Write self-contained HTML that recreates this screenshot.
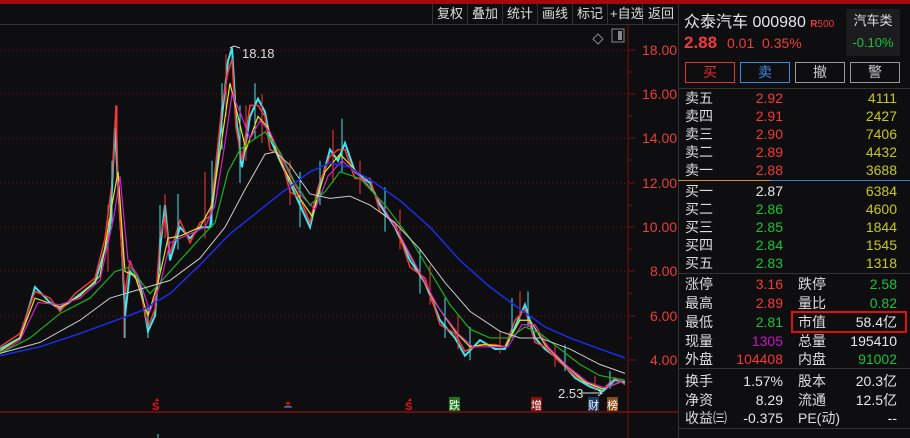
<!DOCTYPE html>
<html><head><meta charset="utf-8"><style>
*{margin:0;padding:0;box-sizing:border-box}
body{width:910px;height:438px;background:#0e0e10;overflow:hidden;position:relative;font-family:"Liberation Sans","Noto Sans CJK SC",sans-serif;color:#ddd}
.a{position:absolute;white-space:nowrap}
.tb{position:absolute;top:4px;height:20px;font-size:13px;color:#ddd;line-height:20px}
.sp{position:absolute;top:4px;width:1px;height:20px;background:#333}
.r{color:#f23a3a}.g{color:#19c23a}.y{color:#c8c814}.w{color:#e6e6e6}.m{color:#c01cc0}
.row{position:absolute;left:678px;width:232px;height:18px;font-size:14px;line-height:18px}
.row span{position:absolute}
</style></head><body>
<div class="a" style="left:0;top:0;width:910px;height:4px;background:#a3080c"></div>
<div class="a" style="left:0;top:24px;width:678px;height:1px;background:#333"></div>
<div class="sp" style="left:432px"></div><div class="sp" style="left:467px"></div><div class="sp" style="left:502px"></div><div class="sp" style="left:537px"></div><div class="sp" style="left:572px"></div><div class="sp" style="left:607px"></div><div class="sp" style="left:642px"></div>
<div class="tb" style="left:437px">复权</div>
<div class="tb" style="left:472px">叠加</div>
<div class="tb" style="left:507px">统计</div>
<div class="tb" style="left:542px">画线</div>
<div class="tb" style="left:577px">标记</div>
<div class="tb" style="left:610px">+自选</div>
<div class="tb" style="left:648px">返回</div>
<div class="a" style="left:678px;top:4px;width:1px;height:434px;background:#333"></div>
<svg class="a" style="left:0;top:0" width="678" height="438">
<g stroke="#7a1010" stroke-dasharray="1,3" stroke-width="1">
<line x1="0" y1="50" x2="628" y2="50"/><line x1="0" y1="94" x2="628" y2="94"/><line x1="0" y1="138" x2="628" y2="138"/><line x1="0" y1="183" x2="628" y2="183"/><line x1="0" y1="227" x2="628" y2="227"/><line x1="0" y1="271" x2="628" y2="271"/><line x1="0" y1="316" x2="628" y2="316"/><line x1="0" y1="360" x2="628" y2="360"/></g>
<line x1="628" y1="25" x2="628" y2="438" stroke="#7a1010"/>
<line x1="0" y1="412" x2="678" y2="412" stroke="#7a1010" stroke-width="1.5"/>
<path d="M628 50h7M628 94h7M628 138h7M628 183h7M628 227h7M628 271h7M628 316h7M628 360h7M628 72h4M628 116h4M628 160h4M628 205h4M628 249h4M628 293h4M628 338h4M628 382h4" stroke="#7a1010"/>
<g font-size="14" fill="#f23a3a" font-family="Liberation Sans"><text x="642" y="55">18.00</text><text x="642" y="99">16.00</text><text x="642" y="143">14.00</text><text x="642" y="188">12.00</text><text x="642" y="232">10.00</text><text x="650" y="276">8.00</text><text x="650" y="321">6.00</text><text x="650" y="365">4.00</text></g>
<path d="M598 34l5 5-5 5-5-5z" fill="none" stroke="#888"/><rect x="612" y="29" width="12" height="13" fill="none" stroke="#888"/><rect x="618" y="31" width="4" height="9" fill="#888"/>
<g transform="translate(0,448.7) scale(1,-22.15)" fill="none">
<polyline vector-effect="non-scaling-stroke" stroke="#3fe6f0" stroke-width="2" points="0,4.5 20,5 35,7.3 50,6.6 60,6.3 75,6.8 95,7.5 105,9 110,10 115,14.5 118,12 122,9 125,6 130,8 140,7.5 148,5.3 155,6 160,9 165,11 170,8.5 180,10 190,9.5 200,10 210,10 215,12 222,15 228,17.5 232,18.1 236,15 242,12.7 250,15 258,15.8 265,15.2 270,14 280,13 290,12 300,11 310,10 318,11.5 330,13.5 338,13 345,13.8 355,12.5 370,12 380,11 395,10 410,8.5 425,7.5 440,5.8 455,5 465,4.2 480,4.9 495,4.5 505,4.5 515,5.5 525,6.5 535,5 545,4.5 560,4 575,3.2 590,2.8 603,2.6 615,3.1 625,3"/>
<polyline vector-effect="non-scaling-stroke" stroke="#f23a3a" stroke-width="1.5" points="0,4.6 20,5.2 35,7.1 50,6.8 60,6.2 75,7 95,7.7 105,9.5 112,12 116,15.5 118,12 123,8 125,7 130,8.5 140,7.2 148,5.5 155,6.3 160,9.5 165,10.5 170,8.8 180,10.3 190,9.3 200,10.2 210,10.5 215,12.5 222,15.5 228,17 232,17.6 236,14.5 242,13 250,15.5 258,15.5 265,15 270,13.5 280,13.3 290,11.6 300,11.3 310,10.2 318,11.8 330,13.2 338,13.5 345,13.5 355,12.2 370,12.2 380,10.7 395,10.2 410,8.2 425,7.7 440,5.6 455,5.2 465,4.4 480,4.7 495,4.7 505,4.6 515,5.8 525,6.3 535,4.8 545,4.6 560,3.9 575,3.3 590,2.9 603,2.7 615,3.2 625,2.9"/>
<path vector-effect="non-scaling-stroke" stroke="#3fe6f0" stroke-width="1" d="M112 10v3M160 8v3M178 9v2.5M212 10v3M222 13.5v3M240 12v3.5M255 14v2.5M300 10v2.5M320 11v2M342 12.5v2.4M385 9.8v2M420 7v2M445 5v1.8M470 4v1.5M512 5v1.8M528 5.5v1.6M565 3.5v1.2M610 2.7v0.8M125 5v2M148 5v1.5"/>
<path vector-effect="non-scaling-stroke" stroke="#f23a3a" stroke-width="1" d="M108 8v3M117 13v2.5M165 9.5v2M205 9.5v3M226 15v2.8M246 13v2.5M262 13.8v2.2M290 11v2M333 12v2.4M360 11.5v1.5M400 9v1.8M430 6.5v1.8M458 4.5v1.5M500 4.3v1M520 5.8v1.3M555 3.7v1M595 2.6v0.7M124 5v2"/>
<polyline vector-effect="non-scaling-stroke" stroke="#e8e020" stroke-width="1.2" points="0,4.4 20,5 35,6.8 60,6.4 80,6.9 100,7.8 112,11 118,12.5 125,8 135,7.8 148,6 158,7.5 168,9.5 180,9.6 200,10 212,11 222,14 230,16.5 238,15 246,13.5 258,15 268,14.5 280,13 300,11.3 312,10.5 325,12.5 340,13.3 355,12.6 375,11.5 395,10 415,8.3 435,6.6 455,5.3 470,4.6 485,4.7 505,4.6 520,5.8 530,5.8 545,4.7 565,3.8 585,3 603,2.7 620,3"/>
<polyline vector-effect="non-scaling-stroke" stroke="#d020d0" stroke-width="1.2" points="0,4.3 20,4.9 38,6.6 60,6.5 80,6.8 100,7.6 114,10.5 120,12.3 128,8.5 138,7.8 150,6.2 160,7.4 170,9.3 185,9.6 205,10 215,11 225,13.8 232,16 240,15.2 250,14 260,14.8 270,14.3 285,12.8 300,11.5 315,10.8 328,12.3 342,13 358,12.4 378,11.3 398,9.8 418,8.1 438,6.4 458,5.2 473,4.6 488,4.6 508,4.6 522,5.6 535,5.6 548,4.6 568,3.7 588,3 605,2.75 622,3.05"/>
<polyline vector-effect="non-scaling-stroke" stroke="#1cb01c" stroke-width="1.2" points="0,4.3 30,5 60,6.1 90,6.8 115,8 130,8.2 150,7 170,8 200,9.5 215,10.2 228,12.5 240,13.5 255,14 265,14.3 280,13.4 295,12 310,11 325,11.6 340,12.5 360,12.2 385,11 410,9.5 430,8 450,6.5 470,5.4 490,5 510,5 525,5.5 540,5.2 560,4.5 580,3.8 600,3.3 625,3.1"/>
<polyline vector-effect="non-scaling-stroke" stroke="#cccccc" stroke-width="1" points="0,4.3 40,4.8 80,5.8 110,6.8 140,7.2 170,7.6 200,8.6 225,10 245,11.7 265,13.3 275,13.4 290,12.8 310,11.5 330,11.3 350,11.4 370,11 395,10.2 420,9 445,7.5 470,6.2 500,5.3 520,5 540,5 570,4.5 600,3.8 625,3.4"/>
<polyline vector-effect="non-scaling-stroke" stroke="#1a2ee8" stroke-width="1.5" points="0,4.2 40,4.6 80,5.2 110,5.7 140,6.2 170,7 200,8.3 230,9.7 255,10.6 280,11.5 310,12.5 330,12.9 350,12.7 375,12 400,11.2 430,10 460,8.5 490,7.3 520,6.3 545,5.5 570,5 600,4.5 625,4.1"/>
</g>
<path d="M230 48l4-2 6 2" stroke="#ddd" fill="none"/><text x="242" y="58" font-size="13" fill="#ddd">18.18</text>
<text x="558" y="398" font-size="13" fill="#ddd">2.53</text><path d="M582 393h20l-4-3m4 3l-4 3" stroke="#ddd" fill="none"/>
<g font-size="11" font-family="Liberation Sans" font-weight="bold"><text x="152" y="410" fill="#f01010">S</text><text x="405" y="410" fill="#f01010">S</text></g>
<path d="M157 398l2 3h-4zM410 398l2 3h-4z" fill="#f01010"/><path d="M288 401l3 3h-6zM288 404l3 3h-6z" fill="#c01010"/><path d="M284 407h8" stroke="#3af"/>
<rect x="449" y="397" width="11" height="14" fill="#1a7a1a"/><text x="449" y="409" font-size="11" fill="#fff">跌</text>
<rect x="531" y="397" width="11" height="14" fill="#8a1010"/><text x="531" y="409" font-size="11" fill="#fff">增</text>
<rect x="588" y="397" width="11" height="14" fill="#1a3a6a"/><text x="588" y="409" font-size="11" fill="#fff">财</text>
<rect x="607" y="397" width="11" height="14" fill="#8a4a10"/><text x="607" y="409" font-size="11" fill="#fff">榜</text>
<line x1="158" y1="434" x2="158" y2="438" stroke="#3fe6f0"/>
</svg>
<div class="a" style="left:684px;top:8px;font-size:16px;color:#e6e6e6">众泰汽车 000980 <span style="color:#f23a3a;font-size:10px;font-weight:bold">R</span><span style="color:#f23a3a;font-size:10px">500</span></div>
<div class="a" style="left:684px;top:33px;font-size:17px;font-weight:bold;color:#f23a3a">2.88</div>
<div class="a" style="left:727px;top:35px;font-size:14px;color:#f23a3a">0.01&nbsp;&nbsp;0.35%</div>
<div class="a" style="left:846px;top:9px;width:54px;height:47px;background:#1c1c1e;text-align:center;font-size:13px;line-height:22px;padding-top:1px">汽车类<br><span class="g">-0.10%</span></div>
<div class="a" style="left:685px;top:62px;width:50px;height:21px;border:1px solid #e03030;color:#e03030;text-align:center;font-size:14px;line-height:19px">买</div>
<div class="a" style="left:740px;top:62px;width:50px;height:21px;border:1px solid #3a8ae0;color:#3a8ae0;text-align:center;font-size:14px;line-height:19px">卖</div>
<div class="a" style="left:795px;top:62px;width:50px;height:21px;border:1px solid #999;color:#ccc;text-align:center;font-size:14px;line-height:19px">撤</div>
<div class="a" style="left:850px;top:62px;width:50px;height:21px;border:1px solid #999;color:#ccc;text-align:center;font-size:14px;line-height:19px">警</div>
<div class="a" style="left:678px;top:88px;width:232px;height:1px;background:#333"></div>
<div class="a" style="left:678px;top:180px;width:93px;height:1px;background:#c89040"></div>
<div class="a" style="left:771px;top:180px;width:139px;height:1px;background:#3a7ad0"></div>
<div class="a" style="left:678px;top:273px;width:232px;height:1px;background:#333"></div>
<div class="a" style="left:678px;top:368px;width:232px;height:1px;background:#333"></div>
<div class="a" style="left:678px;top:428px;width:232px;height:1px;background:#333"></div>
<div class="row" style="top:89px"><span style="left:7px">卖五</span><span class="r" style="right:127px">2.92</span><span class="y" style="right:13px">4111</span></div>
<div class="row" style="top:107px"><span style="left:7px">卖四</span><span class="r" style="right:127px">2.91</span><span class="y" style="right:13px">2427</span></div>
<div class="row" style="top:125px"><span style="left:7px">卖三</span><span class="r" style="right:127px">2.90</span><span class="y" style="right:13px">7406</span></div>
<div class="row" style="top:143px"><span style="left:7px">卖二</span><span class="r" style="right:127px">2.89</span><span class="y" style="right:13px">4432</span></div>
<div class="row" style="top:161px"><span style="left:7px">卖一</span><span class="r" style="right:127px">2.88</span><span class="y" style="right:13px">3688</span></div>
<div class="row" style="top:182px"><span style="left:7px">买一</span><span class="w" style="right:127px">2.87</span><span class="y" style="right:13px">6384</span></div>
<div class="row" style="top:200px"><span style="left:7px">买二</span><span class="g" style="right:127px">2.86</span><span class="y" style="right:13px">4600</span></div>
<div class="row" style="top:218px"><span style="left:7px">买三</span><span class="g" style="right:127px">2.85</span><span class="y" style="right:13px">1844</span></div>
<div class="row" style="top:236px"><span style="left:7px">买四</span><span class="g" style="right:127px">2.84</span><span class="y" style="right:13px">1545</span></div>
<div class="row" style="top:254px"><span style="left:7px">买五</span><span class="g" style="right:127px">2.83</span><span class="y" style="right:13px">1318</span></div>
<div class="row" style="top:275px"><span style="left:7px">涨停</span><span class="r" style="right:127px">3.16</span><span style="left:120px">跌停</span><span class="g" style="right:13px">2.58</span></div>
<div class="row" style="top:294px"><span style="left:7px">最高</span><span class="r" style="right:127px">2.89</span><span style="left:120px">量比</span><span class="g" style="right:13px">0.82</span></div>
<div class="row" style="top:313px"><span style="left:7px">最低</span><span class="g" style="right:127px">2.81</span><span style="left:120px">市值</span><span class="w" style="right:13px">58.4亿</span></div>
<div class="a" style="left:791px;top:311px;width:116px;height:22px;border:2px solid #e01010"></div>
<div class="row" style="top:332px"><span style="left:7px">现量</span><span class="m" style="right:127px">1305</span><span style="left:120px">总量</span><span class="w" style="right:13px">195410</span></div>
<div class="row" style="top:350px"><span style="left:7px">外盘</span><span class="r" style="right:127px">104408</span><span style="left:120px">内盘</span><span class="g" style="right:13px">91002</span></div>
<div class="row" style="top:372px"><span style="left:7px">换手</span><span class="w" style="right:127px">1.57%</span><span style="left:120px">股本</span><span class="w" style="right:13px">20.3亿</span></div>
<div class="row" style="top:391px"><span style="left:7px">净资</span><span class="w" style="right:127px">8.29</span><span style="left:120px">流通</span><span class="w" style="right:13px">12.5亿</span></div>
<div class="row" style="top:409px"><span style="left:7px">收益㈢</span><span class="w" style="right:127px">-0.375</span><span style="left:120px">PE(动)</span><span class="w" style="right:13px">--</span></div>
</body></html>
